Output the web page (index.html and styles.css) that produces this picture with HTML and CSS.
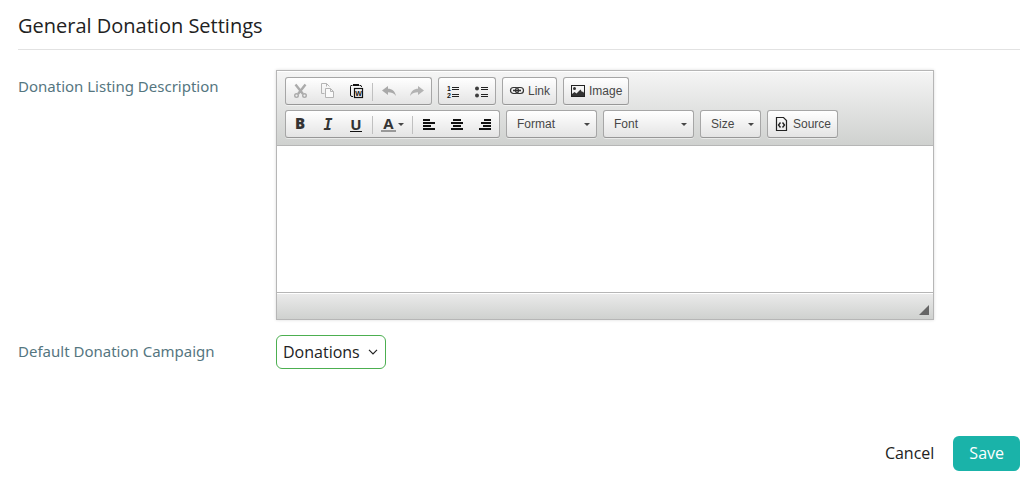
FILE: index.html
```html
<!DOCTYPE html>
<html lang="en">
<head>
  <meta charset="UTF-8" />
  <meta name="viewport" content="width=device-width, initial-scale=1" />
  <title>General Donation Settings</title>
  <link rel="stylesheet" href="styles.css">
</head>
<body>
  <form class="settings">
    <h2>General Donation Settings</h2>

    <div class="row">
      <label class="row-label" for="description">Donation Listing Description</label>
      <div class="editor">
        <div class="toolbar">
          <div class="toolbar-line">
            <div class="group">
              <button type="button" class="tool" aria-label="Cut" disabled>
                <svg viewBox="0 0 16 16" fill="none" stroke="#ababab">
                  <path d="M3.5 1.5 L11 11 M13.5 1.5 L6 11" stroke-width="2.4" />
                  <circle cx="4.5" cy="12.6" r="1.8" stroke-width="1.4" />
                  <circle cx="12.5" cy="12.6" r="1.8" stroke-width="1.4" />
                </svg>
              </button>
              <button type="button" class="tool" aria-label="Copy" disabled>
                <svg viewBox="0 0 16 16" fill="none" stroke="#b4b4b4">
                  <path d="M4.5 10.5 H1.5 V.5 H6.5 L9.5 3.5 M6.5 .5 V3.5" />
                  <path d="M5.5 5.5 H10.5 L13.5 8.5 V14.5 H5.5 Z M10.5 5.5 V8.5 H13.5" fill="#fafafa" />
                </svg>
              </button>
              <button type="button" class="tool" aria-label="Paste from Word">
                <svg viewBox="0 0 16 16" fill="none" stroke="#111">
                  <path d="M4 2.5 H3 Q2.5 2.5 2.5 3.5 V12 Q2.5 13.5 4 13.5 H5 M12 2.5 H13 Q13.5 2.5 13.5 4" />
                  <path d="M5 1.5 H11 M4.5 2.5 H11.5" />
                  <rect x="6.5" y="5.5" width="8" height="9" stroke-width="1.2" />
                  <text x="10.5" y="12.5" class="icon-text">W</text>
                </svg>
              </button>
              <span class="separator"></span>
              <button type="button" class="tool" aria-label="Undo" disabled>
                <svg viewBox="0 0 16 16" fill="#a9a9a9">
                  <path d="M1 7.5 L7 3 V5.8 C11 5.8 14 8 15 13 C12.5 10 10.5 9.3 7 9.3 V12 Z" />
                </svg>
              </button>
              <button type="button" class="tool" aria-label="Redo" disabled>
                <svg viewBox="0 0 16 16" fill="#b3b3b3">
                  <path d="M15 7.5 L9 3 V5.8 C5 5.8 2 8 1 13 C3.5 10 5.5 9.3 9 9.3 V12 Z" />
                </svg>
              </button>
            </div>
            <div class="group">
              <button type="button" class="tool" aria-label="Numbered list">
                <svg viewBox="0 0 16 16" fill="none" stroke="#222">
                  <path d="M7 4.5 H14 M7 6.5 H14 M7 11.5 H14 M7 13.5 H14" stroke-width="1.2" />
                  <text x="4" y="8" class="icon-text">1</text>
                  <text x="4" y="15" class="icon-text">2</text>
                </svg>
              </button>
              <button type="button" class="tool" aria-label="Bulleted list">
                <svg viewBox="0 0 16 16" fill="#3d3d3d" stroke="#222">
                  <path d="M8 4.5 H15 M8 6.5 H15 M8 11.5 H15 M8 13.5 H15" stroke-width="1.2" />
                  <circle cx="4" cy="5.5" r="2" stroke="none" />
                  <circle cx="4" cy="12.5" r="2" stroke="none" />
                </svg>
              </button>
            </div>
            <div class="group">
              <button type="button" class="tool">
                <svg viewBox="0 0 16 16" fill="none" stroke="#333" stroke-width="1.2">
                  <rect x="1.5" y="4.5" width="8" height="6" rx="3" />
                  <rect x="6.5" y="4.5" width="8" height="6" rx="3" />
                  <path d="M4 7.5 H12" stroke-width="1.6" />
                </svg>
                <span>Link</span>
              </button>
            </div>
            <div class="group">
              <button type="button" class="tool">
                <svg viewBox="0 0 16 16" fill="#333">
                  <rect x="1.5" y="2.5" width="13" height="11" fill="none" stroke="#222" />
                  <circle cx="4.5" cy="5.5" r="1.5" />
                  <path d="M2 13 V11 L4.5 9 L6.5 10.5 L10.5 6.5 L12 9 L13 8.5 L14 10 V13 Z" />
                </svg>
                <span>Image</span>
              </button>
            </div>
          </div>

          <div class="toolbar-line">
            <div class="group">
              <button type="button" class="tool letter bold">B</button>
              <button type="button" class="tool letter italic">I</button>
              <button type="button" class="tool letter underline"><span>U</span></button>
              <span class="separator"></span>
              <button type="button" class="tool letter color" aria-label="Text color"><span>A</span></button>
              <span class="separator"></span>
              <button type="button" class="tool" aria-label="Align left">
                <svg viewBox="0 0 16 16" fill="none" stroke="#111" stroke-width="2">
                  <path d="M2 4 H9 M2 7 H14 M2 10 H10 M2 13 H14" />
                </svg>
              </button>
              <button type="button" class="tool" aria-label="Center">
                <svg viewBox="0 0 16 16" fill="none" stroke="#111" stroke-width="2">
                  <path d="M4 4 H12 M2 7 H14 M4 10 H12 M2 13 H14" />
                </svg>
              </button>
              <button type="button" class="tool" aria-label="Align right">
                <svg viewBox="0 0 16 16" fill="none" stroke="#111" stroke-width="2">
                  <path d="M7 4 H14 M4 7 H14 M6 10 H14 M2 13 H14" />
                </svg>
              </button>
            </div>
            <div class="group combo">
              <select aria-label="Paragraph format"><option>Format</option></select>
            </div>
            <div class="group combo">
              <select aria-label="Font name"><option>Font</option></select>
            </div>
            <div class="group combo combo-small">
              <select aria-label="Font size"><option>Size</option></select>
            </div>
            <div class="group">
              <button type="button" class="tool">
                <svg viewBox="0 0 16 16" fill="none" stroke="#222">
                  <path d="M2.5 1.5 H9.5 L12.5 4.5 V14.5 H2.5 Z" stroke-width="1.2" />
                  <path d="M6.5 6.5 L4.5 9 L6.5 11.5 M8.5 6.5 L10.5 9 L8.5 11.5" stroke-width="1.4" />
                </svg>
                <span>Source</span>
              </button>
            </div>
          </div>
        </div>
        <textarea id="description"></textarea>
        <div class="editor-bottom">
          <span class="resizer"></span>
        </div>
      </div>
    </div>

    <div class="row">
      <label class="row-label" for="campaign">Default Donation Campaign</label>
      <div class="campaign">
        <select id="campaign"><option>Donations</option></select>
        <svg viewBox="0 0 10 6" fill="none" stroke="#222" stroke-width="1.2">
          <path d="M1 .8 L5 4.8 L9 .8" />
        </svg>
      </div>
    </div>

    <div class="actions">
      <a href="#" class="cancel">Cancel</a>
      <button type="submit" class="save">Save</button>
    </div>
  </form>
</body>
</html>
```

FILE: styles.css
```css
* {
  box-sizing: border-box;
}
body {
  margin: 0;
  background: #fff;
  color: #222;
  font-family: "Open Sans", sans-serif;
  font-size: 16px;
}
.settings {
  padding: 9px 9px 9px 18px;
}
h2 {
  margin: 0 0 20px;
  padding-bottom: 6px;
  border-bottom: 1px solid #e2e2e2;
  font-size: 20px;
  font-weight: 400;
  line-height: 34px;
}
.row {
  display: grid;
  grid-template-columns: 258px minmax(0, 1fr) 86px;
  margin-bottom: 15px;
}
.row-label {
  padding-top: 5px;
  color: #55767f;
  font-family: "Noto Sans", "Open Sans", sans-serif;
  font-size: 15px;
  line-height: 22px;
}

/* editor */
.editor {
  border: 1px solid #b6b6b6;
  box-shadow: 0 0 3px rgba(0,0,0,0.15);
}
.toolbar {
  display: flex;
  flex-direction: column;
  gap: 5px;
  padding: 6px 8px 7px;
  border-bottom: 1px solid #b6b6b6;
  background: linear-gradient(#f5f5f5, #cfd1cf);
  box-shadow: inset 0 1px 0 #fff;
}
.toolbar-line {
  display: flex;
  flex-wrap: wrap;
  gap: 5px 6px;
}
.group {
  display: flex;
  height: 28px;
  border: 1px solid #a6a6a6;
  border-bottom-color: #979797;
  border-radius: 3px;
  background: linear-gradient(#fff, #e4e4e4);
  box-shadow: 0 1px 0 rgba(255,255,255,0.5);
}
.tool {
  display: flex;
  align-items: center;
  gap: 3px;
  padding: 0 6px;
  border: none;
  background: none;
  color: #474747;
  font-family: "Liberation Sans", Arial, sans-serif;
  font-size: 12px;
  cursor: pointer;
}
.tool svg {
  display: block;
  width: 16px;
  height: 16px;
}
.icon-text {
  fill: #111;
  stroke: none;
  font-family: "Liberation Sans", Arial, sans-serif;
  font-size: 7px;
  font-weight: bold;
  text-anchor: middle;
}
.separator {
  width: 1px;
  height: 18px;
  margin: 5px 2px 0;
  background: #c0c0c0;
}
.letter {
  justify-content: center;
  width: 28px;
  color: #333;
  font-family: "Open Sans", sans-serif;
  font-size: 15px;
  font-weight: 700;
  line-height: 16px;
}
.bold {
  padding-bottom: 2px;
  font-weight: 800;
}
.italic {
  padding-top: 2px;
  font-family: "DejaVu Sans Mono", monospace;
  font-style: italic;
}
.letter span {
  border-bottom: 1px solid #111;
  line-height: 14px;
}
.color {
  width: 35px;
  gap: 2px;
}
.color span {
  width: 15px;
  border-bottom: 2px solid #999;
}
.color::after,
.combo::after {
  content: "";
  border: 3px solid transparent;
  border-top-color: #474747;
  border-bottom: none;
}
.combo {
  position: relative;
  width: 91px;
}
.combo-small {
  width: 61px;
}
.combo::after {
  position: absolute;
  top: 12px;
  right: 6px;
  pointer-events: none;
}
.combo select {
  width: 100%;
  padding: 0 10px;
  border: none;
  background: none;
  color: #474747;
  font-family: "Liberation Sans", Arial, sans-serif;
  font-size: 12px;
  appearance: none;
}
textarea {
  display: block;
  width: 100%;
  height: 146px;
  padding: 20px;
  border: none;
  outline: none;
  resize: none;
  font-family: "Open Sans", sans-serif;
  font-size: 13px;
}
.editor-bottom {
  display: flex;
  align-items: flex-end;
  justify-content: flex-end;
  height: 27px;
  padding: 4px;
  border-top: 1px solid #b6b6b6;
  background: linear-gradient(#ebebeb, #cfd1cf);
  box-shadow: inset 0 1px 0 #fff;
}
.resizer {
  border: 5px solid transparent;
  border-right-color: #666;
  border-bottom-color: #666;
  cursor: se-resize;
}

/* campaign drop-down */
.campaign {
  position: relative;
  justify-self: start;
}
.campaign select {
  display: block;
  width: 110px;
  height: 34px;
  padding: 0 6px;
  border: 1px solid #4caf50;
  border-radius: 6px;
  background: #fff;
  color: #222;
  font-family: inherit;
  font-size: 16px;
  appearance: none;
}
.campaign svg {
  position: absolute;
  top: 14px;
  right: 8px;
  width: 10px;
  height: 6px;
  pointer-events: none;
}

.actions {
  display: flex;
  justify-content: flex-end;
  align-items: center;
  gap: 19px;
  margin-top: 67px;
}
.cancel {
  padding-bottom: 2px;
  color: #222;
  text-decoration: none;
}
.save {
  height: 35px;
  padding: 0 16px 2px;
  border: none;
  border-radius: 6px;
  background: #1ab3a9;
  color: #fff;
  font-family: inherit;
  font-size: 16px;
  cursor: pointer;
}
```
